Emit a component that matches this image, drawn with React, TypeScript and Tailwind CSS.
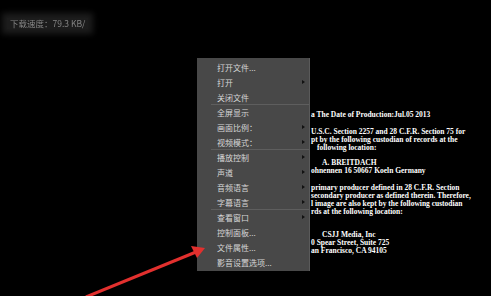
const menuItems: { label: string; sub?: boolean; sep?: boolean }[] = [
  { label: '打开文件...' },
  { label: '打开', sub: true },
  { label: '关闭文件', sep: true },
  { label: '全屏显示' },
  { label: '画面比例：', sub: true },
  { label: '视频模式：', sub: true, sep: true },
  { label: '播放控制', sub: true },
  { label: '声道', sub: true },
  { label: '音频语言', sub: true },
  { label: '字幕语言', sub: true, sep: true },
  { label: '查看窗口', sub: true },
  { label: '控制面板...' },
  { label: '文件属性...' },
  { label: '影音设置选项...' },
];

const Line = ({ text, pl = 0 }: { text: string; pl?: number }) => (
  <div className="h-[8px] leading-[8px] whitespace-nowrap" style={{ paddingLeft: pl }}>
    {text}
  </div>
);

export default function App() {
  return (
    <div className="relative w-[491px] h-[296px] overflow-hidden bg-black">
      {/* download speed */}
      <div className="px-[7px] pt-[9px]">
        <span className="inline-block px-[3px] h-[11px] leading-[11px] text-[8.5px] text-[#858585] bg-[#1c1c1c] shadow-[0_0_6px_5px_#1c1c1c] blur-[0.3px] font-['Noto_Sans_CJK_SC',sans-serif]">
          下载速度：79.3 KB/
        </span>
      </div>

      {/* video frame text */}
      <div className="ml-[311px] mt-[78px] text-[7.5px] font-bold text-white font-['Liberation_Serif',serif]">
        <Line text="a  The Date of Production:Jul.05 2013" />
        <div className="mt-[9px]">
          <Line text="U.S.C. Section 2257 and 28 C.F.R. Section 75 for" />
          <Line text="pt by the following custodian of records at the" />
          <Line text="following location:" pl={6} />
        </div>
        <div className="mt-[7px]">
          <Line text="A. BREITDACH" pl={11} />
          <Line text="ohnennen 16 50667 Koeln Germany" />
        </div>
        <div className="mt-[9px]">
          <Line text="primary producer defined in 28 C.F.R. Section" />
          <Line text="secondary producer as defined therein. Therefore," />
          <Line text="l image are also kept by the following custodian" />
          <Line text="rds at the following location:" />
        </div>
        <div className="mt-[15px]">
          <Line text="CSJJ Media, Inc" pl={11} />
          <Line text="0 Spear Street, Suite 725" />
          <Line text="an Francisco, CA 94105" />
        </div>
      </div>

      {/* context menu */}
      <div className="absolute left-[197px] top-[58px] w-[113px] h-[213px] bg-[#484848] border-r border-[#5a5a5a] py-[2px] font-['Noto_Sans_CJK_SC',sans-serif] text-[8px] text-[#d6d6d6]">
        {menuItems.map((it) => (
          <div key={it.label} className="relative flex items-center h-[15px] pl-[20px]">
            <span className="leading-none">{it.label}</span>
            {it.sub && (
              <span className="absolute right-[4px] top-[5px] w-0 h-0 border-y-[2.5px] border-y-transparent border-l-[3px] border-l-[#111]" />
            )}
            {it.sep && <div className="absolute left-[14px] right-0 bottom-0 h-px bg-[#5e5e5e]" />}
          </div>
        ))}
      </div>

      {/* red annotation arrow */}
      <svg className="absolute left-0 top-0" width="491" height="296" viewBox="0 0 491 296">
        <line x1="86" y1="297" x2="196" y2="252" stroke="#e2302e" strokeWidth="3" />
        <polygon points="205,248 191,246 197,258" fill="#e2302e" />
      </svg>
    </div>
  );
}
